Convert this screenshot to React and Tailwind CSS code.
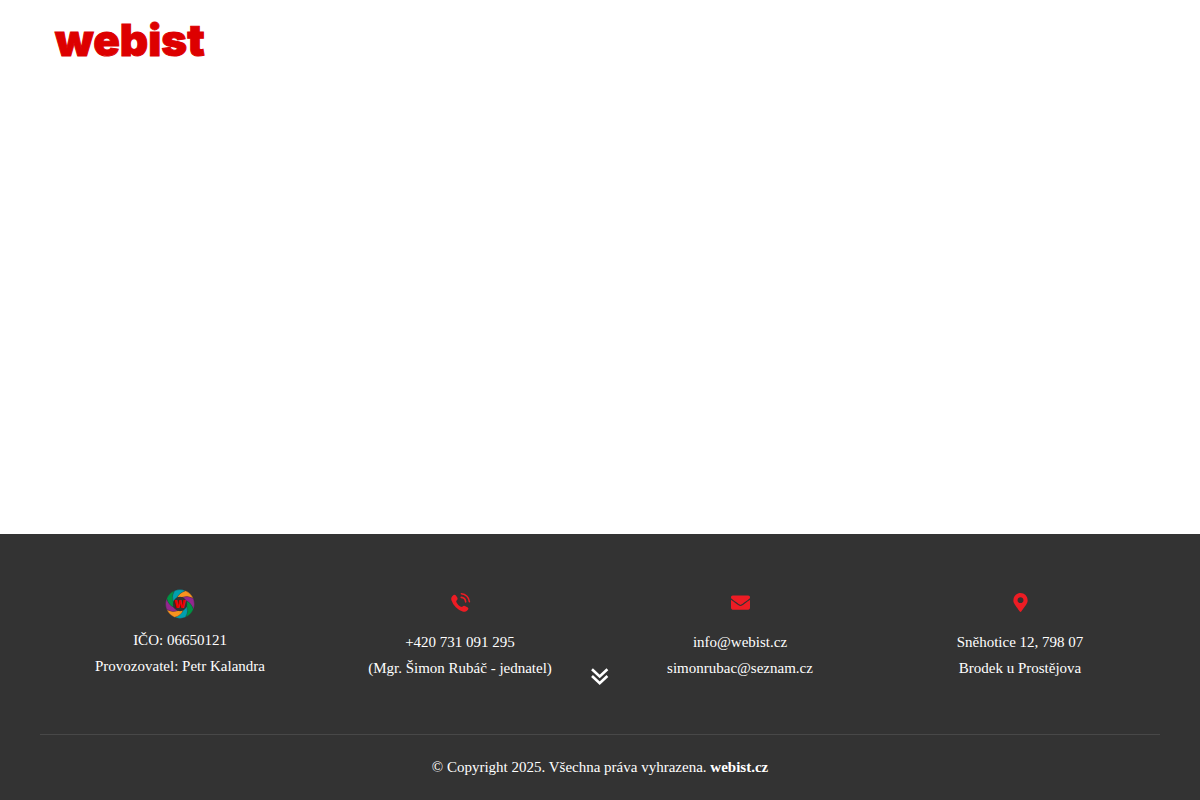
import { FaEnvelope, FaMapMarkerAlt } from "react-icons/fa";

const petals = ["#f7931e", "#93278f", "#009245", "#00a0af", "#f7931e", "#93278f", "#009245", "#00a0af"];

function Badge() {
  return (
    <div className="relative flex h-7 w-7 items-center justify-center">
      <svg viewBox="-50 -50 100 100" className="absolute size-[30px]" aria-hidden="true">
        {petals.map((color, i) => (
          <path
            key={i}
            d="M-18 -44.5A48 48 0 0 1 18 -44.5Q-2 -38 -10.8 -20.3L-22 -7Q-30 -26 -18 -44.5Z"
            fill={color}
            stroke="#333333"
            strokeWidth="1"
            transform={`rotate(${i * 45 + 45})`}
          />
        ))}
        <circle r="24" fill="#333333" />
      </svg>
      <span className="relative pb-0.5 font-['Inter',sans-serif] text-[13px] leading-4 font-black text-[#ed0000]">w</span>
    </div>
  );
}

function PhoneIcon() {
  return (
    <svg viewBox="0 0 24 24" className="size-6 text-[#ed1c24]" fill="none" aria-hidden="true">
      <path
        fill="currentColor"
        d="M4.2 6.3L5.6 5Q6.9 4.2 7.9 5.4L9.4 7.8Q10 9 9.1 9.9L8.1 11Q8.2 12.7 10.3 14.9Q12.3 16.9 14 17.1L15.2 16Q16 15.4 17 15.9L19.8 17.6Q21 18.6 20 19.8L18.7 21.1Q17.4 22.3 14.6 21.5Q11 20.4 7.8 17.2Q4.4 13.7 3.3 10Q2.7 7.8 4.2 6.3Z"
      />
      <path
        stroke="currentColor"
        strokeWidth="1.6"
        strokeLinecap="round"
        d="M13.4 3.7A8.6 8.6 0 0 1 21.4 11.7M13.2 7.4A5 5 0 0 1 17.7 11.9"
      />
    </svg>
  );
}

function Contact({ icon, children }) {
  return (
    <div className="flex flex-col items-center text-center">
      {icon}
      {children}
    </div>
  );
}

export default function App() {
  return (
    <div className="flex min-h-screen flex-col bg-white font-['Liberation_Serif',serif] text-[15px] leading-[26px] text-white">
      <header className="px-[55px] py-4">
        <a
          href="/"
          className="inline-block font-['Inter',sans-serif] text-[44px] leading-[48px] font-black text-[#dd0000] [-webkit-text-stroke:1px_#dd0000]"
        >
          webist
        </a>
      </header>
      <main className="flex-1" />
      <footer className="bg-[#333333] px-10">
        <div className="grid grid-cols-4 pt-14 pb-[53px]">
          <Contact
            icon={
              <div className="mb-[9px] flex h-7 items-center">
                <Badge />
              </div>
            }
          >
            <p>IČO: 06650121</p>
            <p>Provozovatel: Petr Kalandra</p>
          </Contact>
          <Contact
            icon={
              <div className="mb-[15px] flex h-6 items-center">
                <PhoneIcon />
              </div>
            }
          >
            <a href="tel:+420731091295">+420 731 091 295</a>
            <p>(Mgr. Šimon Rubáč - jednatel)</p>
          </Contact>
          <Contact
            icon={
              <div className="mb-[15px] flex h-6 items-center">
                <FaEnvelope className="size-[19px] text-[#ed1c24]" aria-hidden="true" />
              </div>
            }
          >
            <a href="mailto:info@webist.cz">info@webist.cz</a>
            <a href="mailto:simonrubac@seznam.cz">simonrubac@seznam.cz</a>
          </Contact>
          <Contact
            icon={
              <div className="mb-[15px] flex h-6 items-center">
                <FaMapMarkerAlt className="size-[19px] text-[#ed1c24]" aria-hidden="true" />
              </div>
            }
          >
            <p>Sněhotice 12, 798 07</p>
            <p>Brodek u Prostějova</p>
          </Contact>
        </div>
        <p className="border-t border-[#484848] pt-[19px] pb-5 text-center">
          © Copyright 2025. Všechna práva vyhrazena.{" "}
          <a href="/" className="font-bold">
            webist.cz
          </a>
        </p>
      </footer>
      <button
        type="button"
        aria-label="Dolů"
        className="fixed bottom-28 left-1/2 flex size-6 -translate-x-1/2 items-center justify-center"
      >
        <svg viewBox="0 0 24 24" className="size-6" fill="none" stroke="currentColor" strokeWidth="2.6" aria-hidden="true">
          <path d="M4 5.2l7.7 7.3 7.7-7.3M4 12l7.7 7.3L19.4 12" />
        </svg>
      </button>
    </div>
  );
}
